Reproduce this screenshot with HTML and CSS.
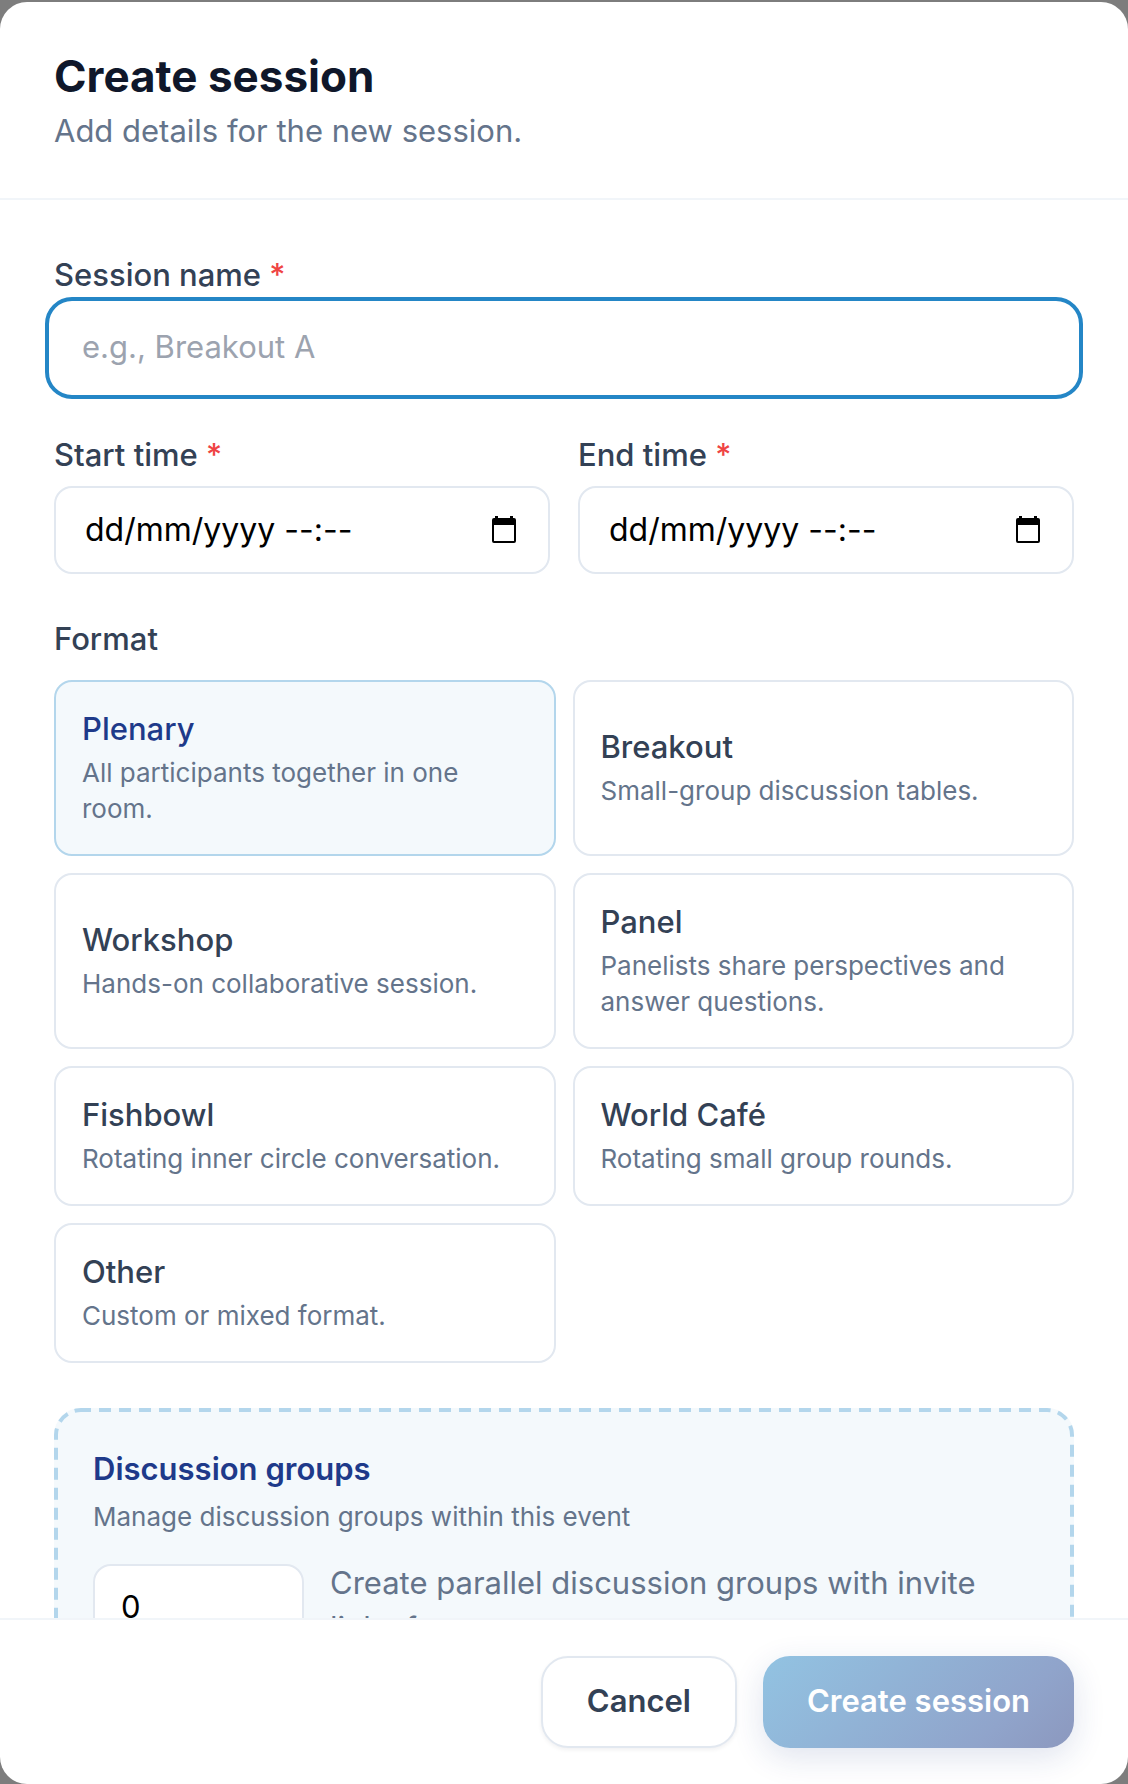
FILE: index.html
```html
<!DOCTYPE html>
<html lang="en-GB">
<head>
<meta charset="utf-8">
<meta name="viewport" content="width=device-width, initial-scale=1">
<title>Create session</title>
<link rel="stylesheet" href="styles.css">
</head>
<body>
<div class="modal" role="dialog" aria-labelledby="modal-title">
  <header class="modal-header">
    <h1 class="modal-title" id="modal-title">Create session</h1>
    <p class="modal-subtitle">Add details for the new session.</p>
  </header>
  <form class="modal-form">
    <div class="modal-body">
      <div class="field">
        <label class="label" for="session-name">Session name <span class="required">*</span></label>
        <input class="input input-focused" id="session-name" type="text" placeholder="e.g., Breakout A">
      </div>
      <div class="time-row">
        <div class="field">
          <label class="label" for="start-time">Start time <span class="required">*</span></label>
          <div class="input date-box">
            <input class="date-input" id="start-time" type="text" placeholder="dd/mm/yyyy --:--">
            <button class="picker" type="button" aria-label="Choose start time">
              <svg class="picker-icon" viewBox="0 0 24 27" aria-hidden="true"><path fill="currentColor" fill-rule="evenodd" d="M3 0h3v2h12V0h3v2h1a2 2 0 0 1 2 2v21a2 2 0 0 1-2 2H2a2 2 0 0 1-2-2V4a2 2 0 0 1 2-2h1zM2 9v16h20V9z"/></svg>
            </button>
          </div>
        </div>
        <div class="field">
          <label class="label" for="end-time">End time <span class="required">*</span></label>
          <div class="input date-box">
            <input class="date-input" id="end-time" type="text" placeholder="dd/mm/yyyy --:--">
            <button class="picker" type="button" aria-label="Choose end time">
              <svg class="picker-icon" viewBox="0 0 24 27" aria-hidden="true"><path fill="currentColor" fill-rule="evenodd" d="M3 0h3v2h12V0h3v2h1a2 2 0 0 1 2 2v21a2 2 0 0 1-2 2H2a2 2 0 0 1-2-2V4a2 2 0 0 1 2-2h1zM2 9v16h20V9z"/></svg>
            </button>
          </div>
        </div>
      </div>
      <section class="format" aria-labelledby="format-label">
        <h2 class="label" id="format-label">Format</h2>
        <div class="format-grid">
          <button class="card card-selected" type="button" aria-pressed="true"><span class="card-title">Plenary</span><span class="card-text">All participants together in one room.</span></button>
          <button class="card" type="button"><span class="card-title">Breakout</span><span class="card-text">Small-group discussion tables.</span></button>
          <button class="card" type="button"><span class="card-title">Workshop</span><span class="card-text">Hands-on collaborative session.</span></button>
          <button class="card" type="button"><span class="card-title">Panel</span><span class="card-text">Panelists share perspectives and answer questions.</span></button>
          <button class="card" type="button"><span class="card-title">Fishbowl</span><span class="card-text">Rotating inner circle conversation.</span></button>
          <button class="card" type="button"><span class="card-title">World Café</span><span class="card-text">Rotating small group rounds.</span></button>
          <button class="card" type="button"><span class="card-title">Other</span><span class="card-text">Custom or mixed format.</span></button>
        </div>
      </section>
      <section class="groups" aria-labelledby="groups-label">
        <h2 class="groups-title" id="groups-label">Discussion groups</h2>
        <p class="groups-text">Manage discussion groups within this event</p>
        <div class="groups-row">
          <input class="input groups-count" id="group-count" type="text" inputmode="numeric" value="0">
          <label class="groups-help" for="group-count">Create parallel discussion groups with invite links for guests.</label>
        </div>
      </section>
    </div>
    <footer class="modal-footer">
      <button class="button button-cancel" type="button">Cancel</button>
      <button class="button button-create" type="submit">Create session</button>
    </footer>
  </form>
</div>
</body>
</html>
```
FILE: styles.css
```css
* {
  box-sizing: border-box;
}

body {
  margin: 0;
  height: 100vh;
  padding-top: 2px;
  background: #7d7d7d;
  font-family: Inter, "Liberation Sans", sans-serif;
  font-size: 31px;
  line-height: 45px;
  color: #334155;
}

h1, h2, p {
  margin: 0;
}

button, input {
  font: inherit;
  color: inherit;
}

.modal {
  display: flex;
  flex-direction: column;
  height: 100%;
  overflow: hidden;
  border-radius: 27px;
  background: #fff;
}

.modal-header {
  padding: 43px 54px 45px;
  border-bottom: 2px solid #f1f5f9;
}

.modal-title {
  font-size: 44px;
  line-height: 63px;
  font-weight: 700;
  color: #0f172a;
}

.modal-subtitle {
  color: #64748b;
}

.modal-form {
  display: flex;
  flex-direction: column;
  flex: 1;
  min-height: 0;
}

.modal-body {
  display: flex;
  flex-direction: column;
  flex: 1;
  min-height: 0;
  overflow: hidden;
  padding: 52px 54px;
}

.field {
  display: flex;
  flex-direction: column;
  gap: 9px;
}

.label {
  display: block;
  font-size: 31px;
  font-weight: 500;
}

.required {
  color: #ef4444;
}

.input {
  width: 100%;
  height: 88px;
  padding: 0 26px 4px;
  border: 2px solid #e2e8f0;
  border-radius: 18px;
  background: #fff;
}

.input-focused {
  height: 84px;
  border-color: transparent;
  outline: 4px solid #2486c6;
  outline-offset: 5px;
}

.input-focused::placeholder {
  color: #9ca3af;
  opacity: 1;
}

.time-row {
  display: grid;
  grid-template-columns: repeat(2, minmax(0, 1fr));
  gap: 28px;
  margin-top: 42px;
}

.date-box {
  display: flex;
  align-items: center;
  padding: 0 32px 2px 29px;
}

.date-input {
  flex: 1;
  min-width: 0;
  padding: 0;
  border: 0;
  outline: 0;
  background: none;
  font-size: 32px;
}

.date-input::placeholder {
  color: #000;
  opacity: 1;
}

.picker {
  display: flex;
  padding: 0;
  border: 0;
  background: none;
  color: #000;
}

.picker-icon {
  width: 24px;
  height: 27px;
}

.format {
  display: flex;
  flex-direction: column;
  gap: 19px;
  margin-top: 42px;
}

.format-grid {
  display: grid;
  grid-template-columns: repeat(2, minmax(0, 1fr));
  gap: 17px;
}

.card {
  display: flex;
  flex-direction: column;
  justify-content: center;
  gap: 4px;
  padding: 24px 26px 27px;
  border: 2px solid #e2e8f0;
  border-radius: 18px;
  background: #fff;
  text-align: left;
}

.card-title {
  font-weight: 500;
}

.card-text {
  font-size: 26px;
  line-height: 36px;
  color: #64748b;
}

.card-selected {
  border-color: #b3d6ec;
  background: #f4f9fc;
}

.card-selected .card-title {
  color: #1e3a8a;
}

/* The dashed frame is an SVG outline so that the dash length can be set. */
.groups {
  flex: none;
  margin-top: 45px;
  padding: 38px 39px;
  border-radius: 27px;
  background: #f4f9fc url("data:image/svg+xml,%3Csvg xmlns='http://www.w3.org/2000/svg'%3E%3Crect width='100%25' height='100%25' rx='27' fill='none' stroke='%23b3d6ec' stroke-width='8' stroke-dasharray='12 8' stroke-dashoffset='2'/%3E%3C/svg%3E");
}

.groups-title {
  font-size: 31px;
  font-weight: 600;
  color: #1e3a8a;
}

.groups-text {
  margin-top: 8px;
  font-size: 26px;
  line-height: 36px;
  color: #64748b;
}

.groups-row {
  display: flex;
  align-items: center;
  gap: 26px;
  margin-top: 25px;
}

.groups-count {
  flex: none;
  width: 211px;
  color: #000;
}

.groups-help {
  padding-bottom: 6px;
  color: #64748b;
}

.modal-footer {
  display: flex;
  justify-content: flex-end;
  gap: 26px;
  padding: 36px 54px;
  border-top: 2px solid #f1f5f9;
}

.button {
  height: 92px;
  padding: 0 44px 4px;
  border: 0;
  border-radius: 27px;
  font-weight: 600;
}

.button-cancel {
  border: 2px solid #e2e8f0;
  background: #fff;
  box-shadow: 0 2px 4px rgba(15, 23, 42, 0.06);
}

.button-create {
  background: linear-gradient(135deg, #92c3e2, #90a4cb 75%, #8c98be);
  box-shadow: 0 9px 32px rgba(30, 58, 138, 0.14);
  color: #fff;
}
```
